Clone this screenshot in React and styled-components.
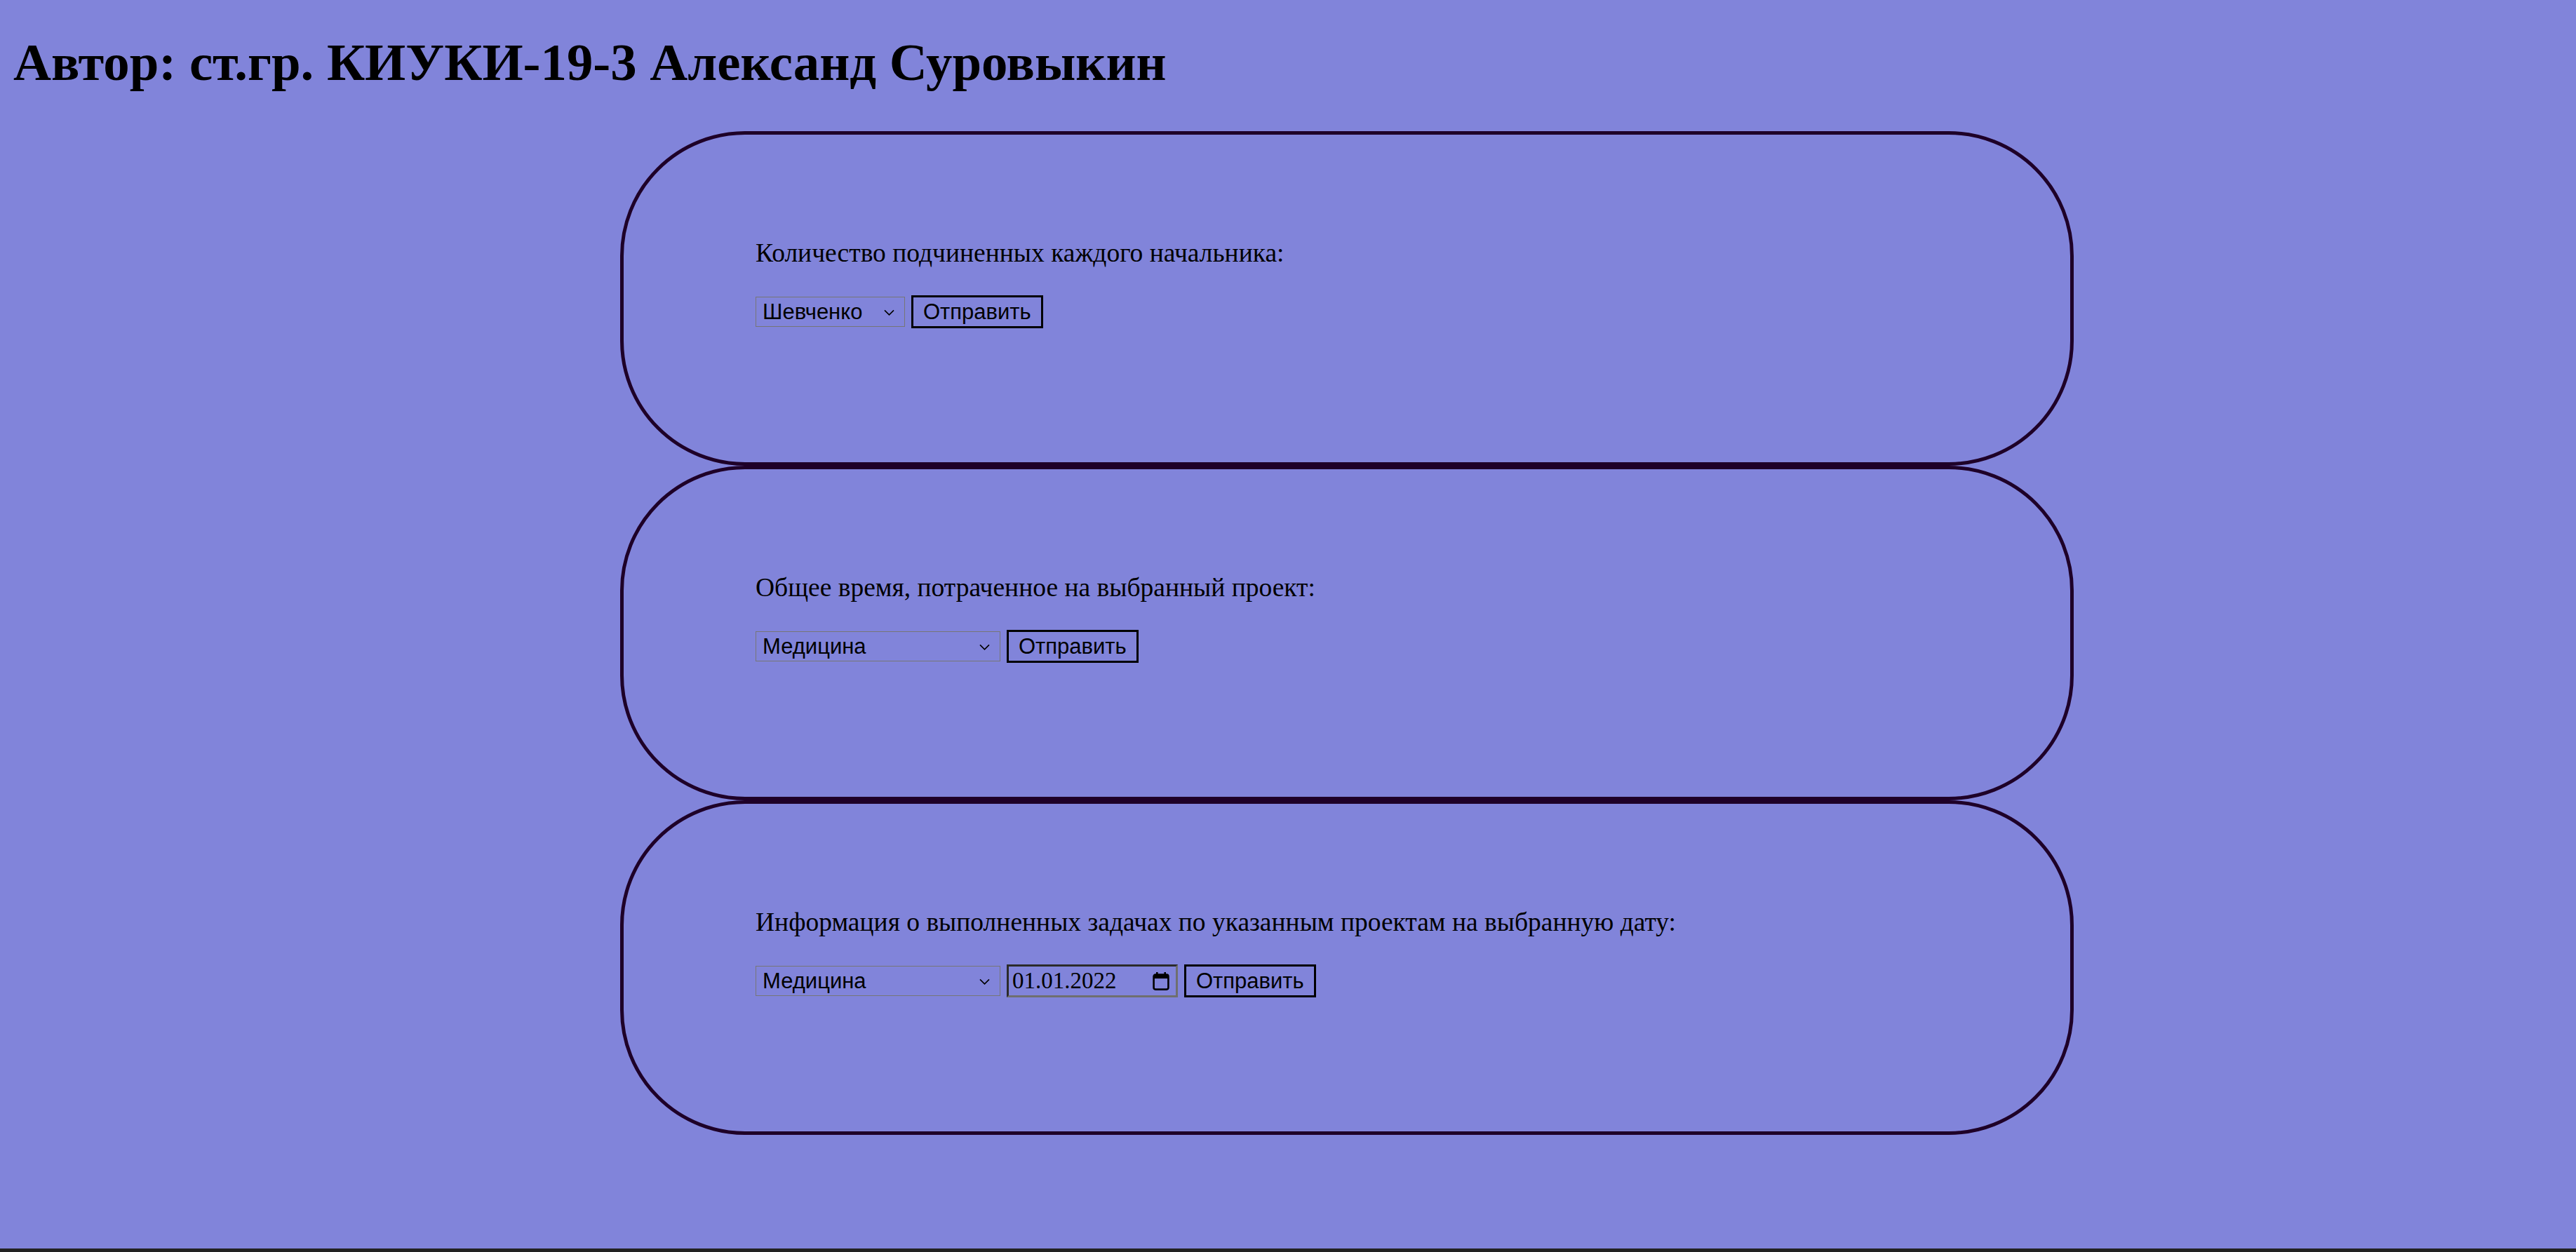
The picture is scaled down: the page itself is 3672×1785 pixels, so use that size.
import React from 'react';
import styled, { createGlobalStyle } from 'styled-components';

const GlobalStyle = createGlobalStyle`
html{
    background:#222;
}
body{
    margin:0;
}
`;

const Page = styled.div`
display:flow-root;
min-height:1780px;
box-sizing:border-box;
padding:0 19px;
background:#8184da;
font-family:"Liberation Serif", "Times New Roman", serif;
color:#000;
`;

const Title = styled.h1`
margin:46px 0 55px;
font-size:74.8px;
font-weight:bold;
line-height:normal;
`;

const Cards = styled.div`
margin-left:865px;
width:2072px;
display:flex;
flex-direction:column;
`;

const Card = styled.section`
height:477px;
box-sizing:border-box;
border:5px solid #1e0028;
border-radius:178px;
padding:147px 0 0 188px;
`;

const Label = styled.p`
margin:0 0 39px;
font-size:37.5px;
line-height:normal;
`;

const Row = styled.form`
display:flex;
align-items:center;
gap:9px;
`;

const SelectWrap = styled.div`
position:relative;
width:${p => p.$width}px;
height:43px;
`;

const Select = styled.select`
appearance:none;
width:100%;
height:100%;
box-sizing:border-box;
border:1px solid #767676;
border-radius:0;
background:transparent;
padding:0 40px 0 9px;
font-family:"Liberation Sans", Arial, sans-serif;
font-size:31px;
color:#000;
outline:none;
`;

const Chevron = styled.svg`
position:absolute;
right:15px;
top:50%;
transform:translateY(-40%);
pointer-events:none;
`;

const SubmitButton = styled.button`
height:47px;
box-sizing:border-box;
padding:0 14px;
border:3px solid #000;
border-radius:0;
background:transparent;
font-family:"Liberation Sans", Arial, sans-serif;
font-size:31px;
color:#000;
`;

const DateWrap = styled.div`
position:relative;
width:244px;
height:47px;
box-sizing:border-box;
border:3px solid;
border-color:#2b2b2b #6f6f6f #6f6f6f #2b2b2b;
`;

const DateInput = styled.input`
width:100%;
height:100%;
box-sizing:border-box;
border:none;
background:transparent;
padding:0 40px 0 5px;
font-family:"Liberation Serif", "Times New Roman", serif;
font-size:33px;
color:#000;
outline:none;
`;

const CalendarIcon = styled.svg`
position:absolute;
right:9px;
top:50%;
transform:translateY(-50%);
pointer-events:none;
`;

function Dropdown({ width, options }) {
    return (
        <SelectWrap $width={width}>
            <Select defaultValue={options[0]}>
                {options.map(o => <option key={o}>{o}</option>)}
            </Select>
            <Chevron width='15' height='9' viewBox='0 0 15 9'>
                <path d='M1 1 L7.5 7.5 L14 1' fill='none' stroke='#000' strokeWidth='1.6' />
            </Chevron>
        </SelectWrap>
    );
}

function DateField({ value }) {
    return (
        <DateWrap>
            <DateInput type='text' defaultValue={value} />
            <CalendarIcon width='24' height='26' viewBox='0 0 24 26'>
                <rect x='5' y='0' width='2.6' height='5' fill='#000' />
                <rect x='16.4' y='0' width='2.6' height='5' fill='#000' />
                <rect x='1.6' y='3.6' width='20.8' height='21' rx='2.5' fill='none' stroke='#000' strokeWidth='2.6' />
                <rect x='1.6' y='3.6' width='20.8' height='5.5' fill='#000' />
            </CalendarIcon>
        </DateWrap>
    );
}

const bosses = ['Шевченко', 'Иванов', 'Петров'];
const projects = ['Медицина', 'Образование', 'Строительство'];

export default function App() {
    return (
        <Page>
            <GlobalStyle />
            <Title>Автор: ст.гр. КИУКИ-19-3 Александ Суровыкин</Title>
            <Cards>
                <Card>
                    <Label>Количество подчиненных каждого начальника:</Label>
                    <Row onSubmit={e => e.preventDefault()}>
                        <Dropdown width={213} options={bosses} />
                        <SubmitButton type='submit'>Отправить</SubmitButton>
                    </Row>
                </Card>
                <Card>
                    <Label>Общее время, потраченное на выбранный проект:</Label>
                    <Row onSubmit={e => e.preventDefault()}>
                        <Dropdown width={349} options={projects} />
                        <SubmitButton type='submit'>Отправить</SubmitButton>
                    </Row>
                </Card>
                <Card>
                    <Label>Информация о выполненных задачах по указанным проектам на выбранную дату:</Label>
                    <Row onSubmit={e => e.preventDefault()}>
                        <Dropdown width={349} options={projects} />
                        <DateField value='01.01.2022' />
                        <SubmitButton type='submit'>Отправить</SubmitButton>
                    </Row>
                </Card>
            </Cards>
        </Page>
    );
}
